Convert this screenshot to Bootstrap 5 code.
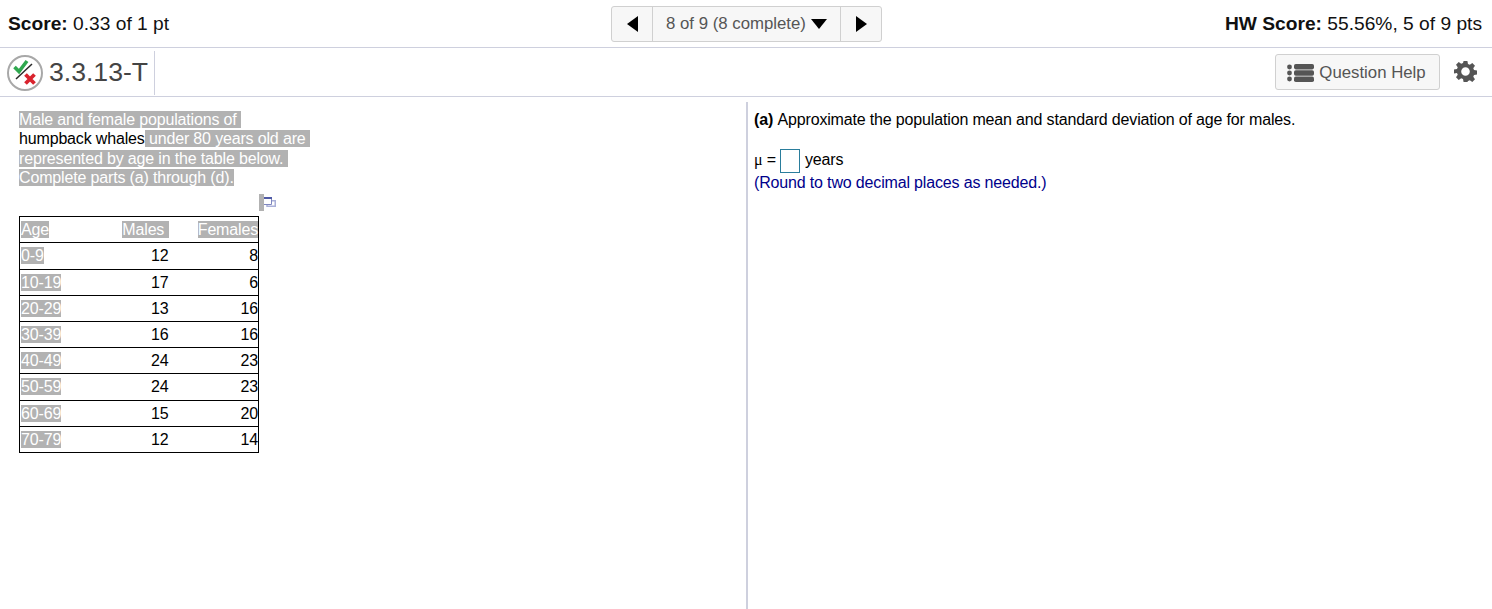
<!DOCTYPE html>
<html lang="en">
<head>
<meta charset="utf-8">
<title>Homework</title>
<link href="https://cdn.jsdelivr.net/npm/bootstrap@5.3.0/dist/css/bootstrap.min.css" rel="stylesheet">
<style>
html,body{height:609px;overflow:hidden}
body{font-family:"Liberation Sans",Arial,sans-serif;font-size:16px;letter-spacing:-.16px;color:#000;background:#fff;line-height:19.3px}
.topbar{height:48px;border-bottom:1px solid #ced0de;padding:0 10px}
.score{font-size:19.2px;letter-spacing:0;color:#111;flex:1 1 0;padding-top:1px}
.score-first{margin-left:-2px}
.pager{height:36px;margin-left:1px;border:1px solid #d0d0d0;border-radius:3px;background:#f7f7f7;color:#555;font-size:16.8px;letter-spacing:0}
.pager-arrow{width:40px;height:100%}
.pager-mid{width:189px;height:100%;border-left:1px solid #d0d0d0;border-right:1px solid #d0d0d0;gap:5px;white-space:nowrap}
.subbar{height:49px;border-bottom:1px solid #ced0de;padding-left:7px;padding-right:15px}
.qid{height:44px;width:148px;border-right:1px solid #ced0de;font-size:26.6px;letter-spacing:0;color:#444;gap:6px;margin-top:1px}
.helpbtn{width:165px;height:36px;margin-top:-1px;background:#f7f7f7;border:1px solid #d0d0d0;border-radius:3px;color:#555;font-size:16.8px;letter-spacing:0;gap:5px;padding:2px 2px 0 0}
.gear{margin-left:14px;margin-top:-2px}
.panes{height:512px}
.leftpane{width:746px;padding:13px 0 0 19px;position:relative}
.rightpane{flex:1;margin-top:5px;border-left:2px solid #ced0de;padding:8px 0 0 6px}
.rightpane b{margin-right:1px}
.hl{background:#b2b2b2;color:#fff}
.popicon{margin:7px 0 0 240px;height:20px;display:flex}
.datatable{margin-top:2px;width:240px;border-collapse:collapse;border:1px solid #000;table-layout:fixed;color:#000}
.datatable td{border:1px solid #000;border-left:0;border-right:0;padding:3px 0 3px 1px;height:26.2px;line-height:19px}
.c-age{width:60px}
.c-males{width:89px;text-align:right}
.c-fem{text-align:right}
.answer{margin-top:20px;padding-top:1px;display:flex;align-items:flex-start;height:24px}
.mu{font-family:"Liberation Serif",serif}
.ansbox{display:inline-block;width:20px;height:24px;border:1px solid #2a7d9c;margin:-1px 5px 0 4px}
.note{color:#00008b}
</style>
</head>
<body>
<div class="topbar d-flex justify-content-between align-items-center">
  <div class="score"><b class="score-first">Score:</b> 0.33 of 1 pt</div>
  <div class="pager d-flex align-items-center">
    <div class="pager-arrow d-flex align-items-center justify-content-center"><svg width="11" height="16" viewBox="0 0 11 16"><path d="M11 0V16L0 8Z" fill="#000"/></svg></div>
    <div class="pager-mid d-flex align-items-center justify-content-center"><span>8 of 9 (8 complete)</span><svg width="16" height="10" viewBox="0 0 16 10"><path d="M0 0H16L8 10Z" fill="#000"/></svg></div>
    <div class="pager-arrow d-flex align-items-center justify-content-center"><svg width="11" height="16" viewBox="0 0 11 16"><path d="M0 0V16L11 8Z" fill="#000"/></svg></div>
  </div>
  <div class="score text-end"><b>HW Score:</b> 55.56%, 5 of 9 pts</div>
</div>
<div class="subbar d-flex justify-content-between align-items-center">
  <div class="qid d-flex align-items-center">
    <svg width="36" height="36" viewBox="0 0 36 36">
      <circle cx="18" cy="18" r="17" fill="#fff" stroke="#a8a8a8" stroke-width="2"/>
      <path d="M9 24 25 9" stroke="#2a2a2a" stroke-width="1.500"/>
      <path d="M7.500 12 12 16.500 20 6" fill="none" stroke="#2fa84f" stroke-width="3.600"/>
      <path d="M18.500 19.500 27.500 28.500M27.500 19.500 18.500 28.500" stroke="#d9232e" stroke-width="3.800"/>
    </svg>
    <span>3.3.13-T</span>
  </div>
  <div class="d-flex align-items-center">
    <button type="button" class="helpbtn btn d-flex align-items-center justify-content-center">
      <svg width="27" height="18" viewBox="0 0 27 18" fill="#555"><circle cx="2.500" cy="3" r="2.400"/><circle cx="2.500" cy="9" r="2.400"/><circle cx="2.500" cy="15" r="2.400"/><rect x="7" y="0" width="20" height="5.400" rx="1.800"/><rect x="7" y="6.300" width="20" height="5.400" rx="1.800"/><rect x="7" y="12.600" width="20" height="5.400" rx="1.800"/></svg>
      <span>Question Help</span>
    </button>
    <svg class="gear" width="23" height="23" viewBox="0 0 24 24" fill="#555"><path fill-rule="evenodd" d="M10 1h4l.6 3.100 1.900.8 2.600-1.800 2.800 2.800-1.800 2.600.8 1.900 3.100.6v4l-3.100.6-.8 1.900 1.800 2.600-2.800 2.800-2.600-1.800-1.900.8L14 23h-4l-.6-3.100-1.900-.8-2.600 1.800-2.800-2.800 1.800-2.600-.8-1.900L0 14v-4l3.100-.6.8-1.900-1.800-2.600 2.800-2.800 2.600 1.800 1.900-.8zM12 7.500a4.500 4.500 0 1 0 0 9 4.500 4.500 0 0 0 0-9z"/></svg>
  </div>
</div>
<div class="panes d-flex">
  <div class="leftpane">
    <div><span class="hl">Male and female populations of&nbsp;</span><br>humpback whales<span class="hl"> under 80 years old are&nbsp;</span><br><span class="hl">represented by age in the table below.&nbsp;</span><br><span class="hl">Complete parts (a) through (d).</span></div>
    <div class="popicon"><svg width="17" height="17" viewBox="0 0 17 17"><rect x="0" y="0" width="5" height="17" fill="#b2b2b2"/><path d="M13 6.750H16.250V12.250H8V11" fill="none" stroke="#aab0d8" stroke-width="1.500"/><path d="M5 3.500H12.500V10.500H5" fill="#fff" stroke="#7f87c0" stroke-width="1"/><rect x="5" y="3" width="8" height="2" fill="#4f5aa6"/></svg></div>
    <table class="datatable">
      <tr><td class="c-age"><span class="hl">Age</span></td><td class="c-males"><span class="hl">Males&nbsp;</span></td><td class="c-fem"><span class="hl">Females</span></td></tr>
      <tr><td><span class="hl">0-9</span></td><td class="c-males">12</td><td class="c-fem">8</td></tr>
      <tr><td><span class="hl">10-19</span></td><td class="c-males">17</td><td class="c-fem">6</td></tr>
      <tr><td><span class="hl">20-29</span></td><td class="c-males">13</td><td class="c-fem">16</td></tr>
      <tr><td><span class="hl">30-39</span></td><td class="c-males">16</td><td class="c-fem">16</td></tr>
      <tr><td><span class="hl">40-49</span></td><td class="c-males">24</td><td class="c-fem">23</td></tr>
      <tr><td><span class="hl">50-59</span></td><td class="c-males">24</td><td class="c-fem">23</td></tr>
      <tr><td><span class="hl">60-69</span></td><td class="c-males">15</td><td class="c-fem">20</td></tr>
      <tr><td><span class="hl">70-79</span></td><td class="c-males">12</td><td class="c-fem">14</td></tr>
    </table>
  </div>
  <div class="rightpane">
    <div><b>(a)</b> Approximate the population mean and standard deviation of age for males.</div>
    <div class="answer"><span class="mu">&mu;</span>&nbsp;=<span class="ansbox"></span>years</div>
    <div class="note">(Round to two decimal places as needed.)</div>
  </div>
</div>
<script src="https://cdn.jsdelivr.net/npm/bootstrap@5.3.0/dist/js/bootstrap.bundle.min.js"></script>
</body>
</html>
